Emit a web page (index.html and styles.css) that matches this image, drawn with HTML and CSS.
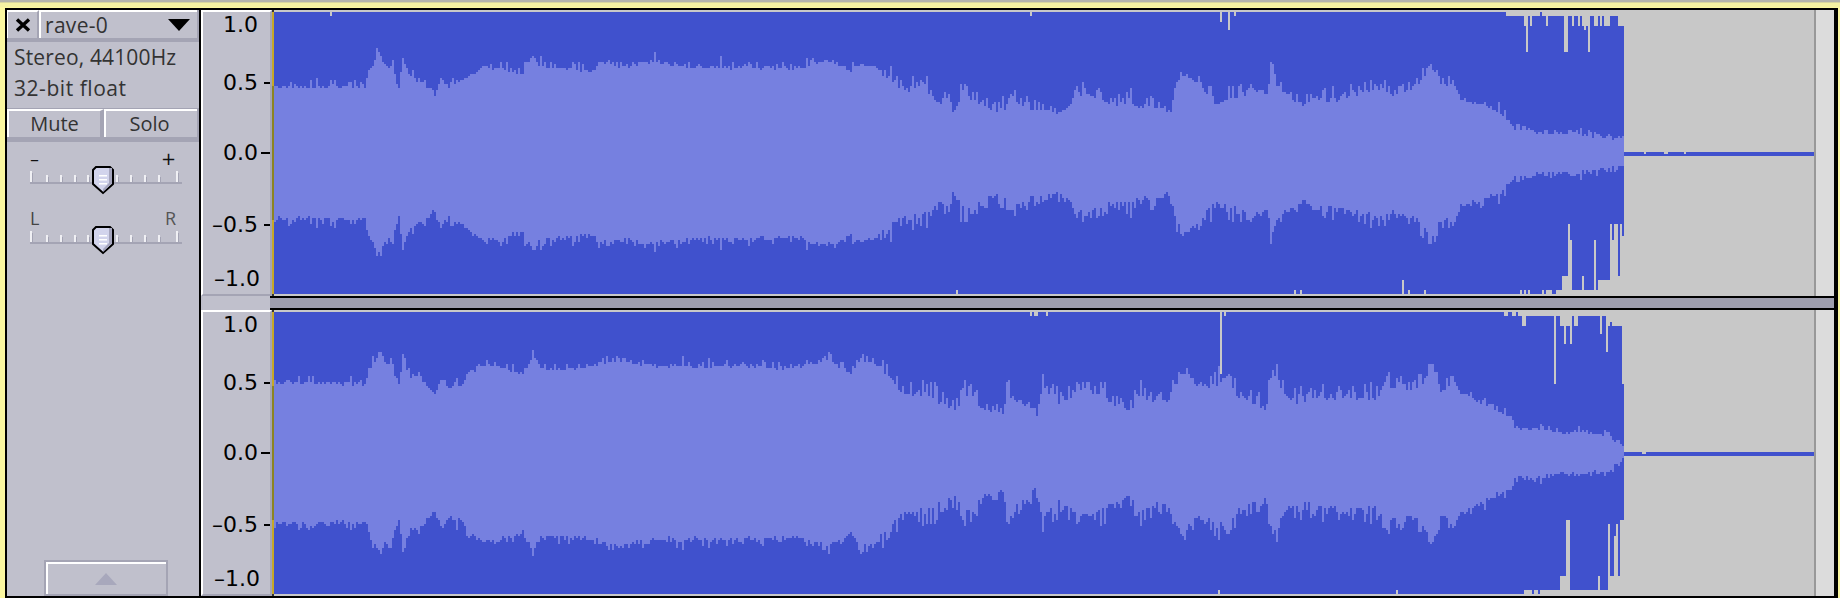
FILE: index.html
```html
<!DOCTYPE html>
<html lang="en">
<head>
<meta charset="utf-8">
<title>rave-0</title>
<link rel="stylesheet" href="styles.css">
</head>
<body>
<div class="frame">
  <aside class="panel">
    <div class="title-row">
      <button class="close" aria-label="Close">
        <svg width="16" height="14" viewBox="0 0 16 14"><path class="close-x" d="M2 1.5 14 12.5M14 1.5 2 12.5"/></svg>
      </button>
      <div class="name">
        <span>rave-0</span>
        <svg width="22" height="12" viewBox="0 0 22 12"><path d="M0 0H22L11 12Z"/></svg>
      </div>
    </div>
    <div class="info">
      <div class="info-line">Stereo, 44100Hz</div>
      <div class="info-line info-second">32-bit float</div>
    </div>
    <div class="buttons">
      <button class="toggle mute">Mute</button>
      <button class="toggle solo">Solo</button>
    </div>
    <div class="slider-labels gain-labels"><span>–</span><span>+</span></div>
    <svg class="slider" width="160" height="30" viewBox="0 0 160 30">
      <use href="#slider-art"/>
    </svg>
    <div class="slider-labels pan-labels"><span class="pan-l">L</span><span class="pan-r">R</span></div>
    <svg class="slider" width="160" height="30" viewBox="0 0 160 30">
      <defs>
        <g id="slider-art">
          <rect class="s-line" x="2" y="17" width="152" height="2"/>
          <path class="s-tick" d="M2 6h2v11H2zM18 10h2v7h-2zM32 10h2v7h-2zM46 10h2v7h-2zM59 10h2v7h-2zM88 10h2v7h-2zM102 10h2v7h-2zM116 10h2v7h-2zM130 10h2v7h-2zM148 6h2v11h-2z"/>
          <path class="s-tick-dark" d="M4 8h1v9H4zM20 12h1v5h-1zM34 12h1v5h-1zM48 12h1v5h-1zM61 12h1v5h-1zM90 12h1v5h-1zM104 12h1v5h-1zM118 12h1v5h-1zM132 12h1v5h-1zM150 8h1v9h-1z"/>
          <path class="s-thumb" d="M68 2h14l3 3v14l-10 9-10-9V5z"/>
          <path class="s-shade" d="M81 3h3v15.500L75 27v-3l6-6z"/>
          <path class="s-grip" d="M71 10h8v1.500h-8zM71 14h8v1.500h-8zM71 18h8v1.500h-8z"/>
        </g>
      </defs>
      <use href="#slider-art"/>
    </svg>
    <button class="collapse" aria-label="Collapse">
      <svg width="22" height="12" viewBox="0 0 22 12"><path d="M11 0 22 12H0Z"/></svg>
    </button>
  </aside>
  <main class="tracks">
    <section class="track">
      <div class="ruler">
        <div class="r-row"><span class="r-label">1.0</span></div>
        <div class="r-row"><span class="r-label">0.5</span><i class="tick"></i></div>
        <div class="r-row"><span class="r-label">0.0</span><i class="tick tick-long"></i></div>
        <div class="r-row"><span class="r-label">–0.5</span><i class="tick"></i></div>
        <div class="r-row"><span class="r-label r-end">–1.0</span></div>
      </div>
      <svg class="wave" data-track="0" width="1542" height="286" viewBox="272 10 1542 286">
        <path class="peak"/><path class="rms"/>
        <rect class="head" x="272" y="12" width="2" height="74"/>
        <rect class="head-dim" x="272" y="86" width="2" height="134"/>
        <rect class="head" x="272" y="220" width="2" height="74"/>
        <rect class="head-cap" x="272" y="10" width="2" height="2"/>
        <rect class="head-cap" x="272" y="294" width="2" height="2"/>
      </svg>
      <div class="side"></div>
    </section>
    <div class="sep"><div class="sep-gap"></div><div class="sep-bar"></div></div>
    <section class="track">
      <div class="ruler">
        <div class="r-row"><span class="r-label">1.0</span></div>
        <div class="r-row"><span class="r-label">0.5</span><i class="tick"></i></div>
        <div class="r-row"><span class="r-label">0.0</span><i class="tick tick-long"></i></div>
        <div class="r-row"><span class="r-label">–0.5</span><i class="tick"></i></div>
        <div class="r-row"><span class="r-label r-end">–1.0</span></div>
      </div>
      <svg class="wave" data-track="1" width="1542" height="286" viewBox="272 10 1542 286">
        <path class="peak"/><path class="rms"/>
        <rect class="head" x="272" y="12" width="2" height="74"/>
        <rect class="head-dim" x="272" y="86" width="2" height="134"/>
        <rect class="head" x="272" y="220" width="2" height="74"/>
        <rect class="head-cap" x="272" y="10" width="2" height="2"/>
        <rect class="head-cap" x="272" y="294" width="2" height="2"/>
      </svg>
      <div class="side"></div>
    </section>
  </main>
</div>
<script src="wave.js"></script>
</body>
</html>
```
FILE: styles.css
```css
* { box-sizing: border-box; }
html, body { margin: 0; height: 598px; overflow: hidden; }
body {
  padding: 8px 2px 0 5px;
  background: linear-gradient(#b4b4ac 0 2px, #d8d6a0 2px 3px, #f5f2a2 3px 7px, #fbf7a0 7px);
  font-family: "Open Sans", sans-serif;
  color: #2a2a2e;
}
.frame {
  display: flex;
  height: 590px;
  border: solid #000;
  border-width: 2px 4px 2px 2px;
}
.panel {
  width: 194px;
  flex: none;
  display: flex;
  flex-direction: column;
  background: #c0c0cc;
  border-right: 2px solid #000;
}
button {
  font: inherit;
  color: inherit;
  background: #c0c0cc;
  padding: 0;
  margin: 0;
  border: 0;
}
.title-row {
  display: flex;
  height: 32px;
  border-bottom: 4px solid #a4a4b4;
  border-right: 2px solid #a4a4b4;
}
.close {
  width: 32px;
  flex: none;
  display: flex;
  align-items: center;
  justify-content: center;
  border-top: 2px solid #fff;
  border-left: 1px solid #fff;
  border-right: 2px solid #a4a4b4;
}
.close-x { fill: none; stroke: #000; stroke-width: 3.400; }
.name {
  flex: 1;
  display: flex;
  align-items: center;
  justify-content: space-between;
  padding: 0 7px 0 4px;
  border-top: 2px solid #fff;
  border-left: 2px solid #fff;
  font-size: 21px;
  line-height: 26px;
  letter-spacing: 0.3px;
  color: #333;
}
.info { height: 67px; padding-left: 7px; border-bottom: 1px solid #a4a4b4; }
.info-line { font-size: 21px; line-height: 31px; color: #333; white-space: nowrap; letter-spacing: 0.15px; }
.info-second { letter-spacing: 0.55px; }
.buttons {
  display: flex;
  height: 33px;
  border-bottom: 5px solid #a4a4b4;
  border-right: 2px solid #a4a4b4;
}
.toggle {
  border-top: 2px solid #fff;
  border-left: 2px solid #fff;
  font-size: 20px;
  line-height: 24px;
  color: #333;
}
.mute { width: 97px; border-right: 4px solid #a4a4b4; }
.solo { flex: 1; padding-right: 4px; }
.slider-labels {
  display: flex;
  justify-content: space-between;
  width: 146px;
  margin-left: 23px;
  height: 14px;
  line-height: 14px;
}
.gain-labels {
  margin-top: 9px;
  padding-top: 1px;
  font-family: "DejaVu Sans", sans-serif;
  font-size: 18px;
  color: #111;
}
.pan-labels { margin-top: 16px; font-size: 18px; }
.pan-l { color: #444; }
.pan-r { color: #555; }
.slider { display: block; margin-left: 21px; flex: none; }
.s-line { fill: #a4a4b4; }
.s-tick { fill: #f0f0f4; }
.s-tick-dark { fill: #a4a4b4; }
.s-thumb { fill: #d2d4ec; stroke: #000; stroke-width: 2; }
.s-shade { fill: #a4a4bc; }
.s-grip { fill: #fff; }
.collapse {
  width: 124px;
  height: 36px;
  margin: auto 0 0 37px;
  flex: none;
  display: flex;
  align-items: center;
  justify-content: center;
  border: 2px solid #a4a4b4;
  box-shadow: inset 2px 2px 0 #fff;
  padding-top: 2px;
}
.collapse path { fill: #a8a8bc; }
.tracks { flex: 1; display: flex; flex-direction: column; min-width: 0; }
.track { display: flex; height: 286px; flex: none; }
.ruler {
  width: 71px;
  flex: none;
  display: grid;
  grid-template-rows: 58px 70px 72px 54px 24px;
  padding-top: 1px;
  background: #c0c0cc;
  border-top: 2px solid #fff;
  border-left: 2px solid #fff;
  border-right: 2px solid #a4a4b4;
  border-bottom: 2px solid #a4a4b4;
}
.r-row { display: flex; align-items: flex-start; height: 24px; }
.r-label {
  width: 55px;
  text-align: right;
  font: 22px/24px "DejaVu Sans", sans-serif;
  color: #000;
  white-space: nowrap;
}
.r-end { width: 57px; }
.tick { width: 6px; height: 2px; margin: 11px 0 0 auto; background: #000; }
.tick-long { width: 9px; }
.wave { flex: none; display: block; background: #c8c8c8; shape-rendering: crispEdges; }
.peak { fill: #4051cd; }
.rms { fill: #7680e0; }
.head { fill: #c6a828; }
.head-dim { fill: #8c8424; }
.head-cap { fill: #333; }
.side { flex: 1; background: #dcdcdc; border-left: 2px solid #999; }
.sep { display: flex; height: 14px; flex: none; }
.sep-gap { width: 69px; background: #c0c0cc; }
.sep-bar { flex: 1; background: #9e9eae; border-top: 2px solid #000; border-bottom: 2px solid #000; }
```
FILE: wave.js
```js
var TRACKS = [
  {
    seed: 4711,
    rms: [[274,87],[365,87],[367,70],[379,55],[384,65],[392,68],[398,90],[402,57],[407,75],[421,85],[435,95],[440,78],[448,88],[463,80],[482,67],[501,68],[520,76],[532,58],[539,66],[566,68],[593,72],[597,62],[627,67],[643,62],[681,66],[738,68],[796,68],[826,60],[850,70],[861,63],[888,72],[900,85],[927,90],[953,108],[965,90],[976,102],[1003,107],[1009,90],[1022,103],[1057,110],[1082,88],[1110,100],[1137,102],[1170,108],[1175,78],[1185,70],[1202,85],[1214,100],[1233,95],[1252,86],[1267,95],[1271,65],[1277,85],[1302,103],[1313,93],[1325,98],[1378,85],[1393,90],[1413,85],[1432,64],[1439,85],[1453,82],[1460,100],[1483,105],[1503,115],[1513,128],[1527,132],[1573,133],[1624,140]],
    top: [[329,331,16],[1029,1031,16],[1219,1222,22],[1228,1230,30],[1234,1236,16],[1506,1624,16],[1540,1542,12],[1524,1526,26],[1526,1528,52],[1529,1532,26],[1546,1548,26],[1564,1567,52],[1567,1568,26],[1572,1574,26],[1578,1580,26],[1582,1588,26],[1584,1586,30],[1588,1590,52],[1594,1598,26],[1600,1602,26],[1604,1607,26],[1608,1610,26],[1617,1624,26]],
    bottom: [[955,957,290],[1293,1295,290],[1299,1301,290],[1401,1403,280],[1407,1409,290],[1423,1425,290],[1520,1522,290],[1524,1526,290],[1528,1530,290],[1542,1544,290],[1545,1552,290],[1556,1562,290],[1562,1568,276],[1568,1570,224],[1570,1572,240],[1572,1582,290],[1582,1584,276],[1584,1594,290],[1594,1596,240],[1596,1598,290],[1598,1610,280],[1610,1612,224],[1612,1614,240],[1614,1618,224],[1618,1620,276],[1620,1622,224],[1622,1624,236]],
    zero: [[1644,1646],[1664,1668],[1684,1686]]
  },
  {
    seed: 90210,
    rms: [[274,82],[365,84],[369,70],[379,52],[384,65],[392,66],[398,92],[402,54],[407,74],[421,80],[435,95],[440,78],[448,88],[463,85],[465,72],[482,67],[505,68],[520,76],[532,58],[539,70],[574,68],[597,65],[618,60],[643,65],[681,67],[738,66],[796,68],[826,60],[850,72],[861,58],[888,72],[900,88],[927,92],[953,108],[965,90],[976,102],[1003,112],[1007,90],[1022,102],[1036,112],[1041,85],[1057,100],[1083,85],[1110,97],[1129,108],[1137,92],[1170,100],[1175,82],[1181,68],[1194,85],[1217,80],[1229,68],[1233,90],[1265,105],[1271,66],[1280,82],[1290,98],[1325,95],[1377,95],[1382,82],[1420,85],[1432,60],[1440,87],[1453,80],[1460,93],[1483,103],[1507,117],[1515,128],[1567,133],[1573,131],[1607,135],[1624,147]],
    top: [[1029,1031,16],[1034,1038,16],[1045,1047,16],[1219,1221,74],[1223,1225,16],[1504,1507,16],[1512,1516,16],[1518,1624,16],[1522,1526,26],[1554,1556,84],[1560,1564,26],[1564,1566,44],[1566,1570,26],[1570,1572,44],[1574,1578,26],[1600,1602,34],[1606,1608,52],[1608,1622,26],[1610,1612,22],[1622,1624,84]],
    bottom: [[1217,1219,290],[1396,1398,290],[1524,1532,290],[1534,1537,290],[1540,1552,290],[1552,1559,290],[1559,1566,276],[1566,1570,220],[1570,1598,290],[1598,1600,276],[1600,1608,290],[1608,1610,224],[1610,1614,276],[1614,1616,236],[1616,1618,224],[1618,1620,276],[1620,1624,220]],
    zero: [[1642,1646]]
  }
];

function makeRandom(seed) {
  var state = seed;
  return function () {
    state = (state * 16807) % 2147483647;
    return state / 2147483647;
  };
}

function interpolate(points, x) {
  for (var i = 1; i < points.length; i++) {
    if (x <= points[i][0]) {
      var a = points[i - 1], b = points[i];
      return a[1] + (b[1] - a[1]) * (x - a[0]) / (b[0] - a[0]);
    }
  }
  return points[points.length - 1][1];
}

function lookup(segments, x, fallback) {
  var value = fallback;
  segments.forEach(function (s) {
    if (x >= s[0] && x < s[1]) value = s[2];
  });
  return value;
}

function even(v) { return Math.round(v / 2) * 2; }

function spikeSize(random, x) {
  var busy = x >= 880 && x < 1450;
  var chance = busy ? 0.32 : 0.16;
  var reach = busy ? 15 : 7;
  return random() < chance ? random() * reach + 2 : 0;
}

function drawTrack(svg, data) {
  var random = makeRandom(data.seed);
  var peak = "", rms = "";
  for (var x = 274; x < 1624; x += 2) {
    var top = lookup(data.top, x, 12);
    var bottom = lookup(data.bottom, x, 294);
    var busy = x >= 880 && x < 1450;
    var base = interpolate(data.rms, x) + (busy ? 4 : 0);
    var jitter = random() * 4 - 2;
    var shared = spikeSize(random, x);
    var upper = shared || spikeSize(random, x) * 0.6;
    var lower = shared || spikeSize(random, x) * 0.6;
    var lightTop = even(base + jitter - upper);
    var lightBottom = even(306 - base - jitter + lower + (random() * 3 - 1.5));
    peak += "M" + x + " " + top + "h2V" + bottom + "h-2z";
    rms += "M" + x + " " + lightTop + "h2V" + lightBottom + "h-2z";
  }
  var zx = 1624;
  data.zero.concat([[1814, 1814]]).forEach(function (n) {
    peak += "M" + zx + " 152H" + n[0] + "v4H" + zx + "z";
    if (n[1] > n[0]) peak += "M" + n[0] + " 154H" + n[1] + "v2H" + n[0] + "z";
    zx = n[1];
  });
  svg.querySelector(".peak").setAttribute("d", peak);
  svg.querySelector(".rms").setAttribute("d", rms);
}

document.querySelectorAll(".wave").forEach(function (svg) {
  drawTrack(svg, TRACKS[Number(svg.dataset.track)]);
});
```
